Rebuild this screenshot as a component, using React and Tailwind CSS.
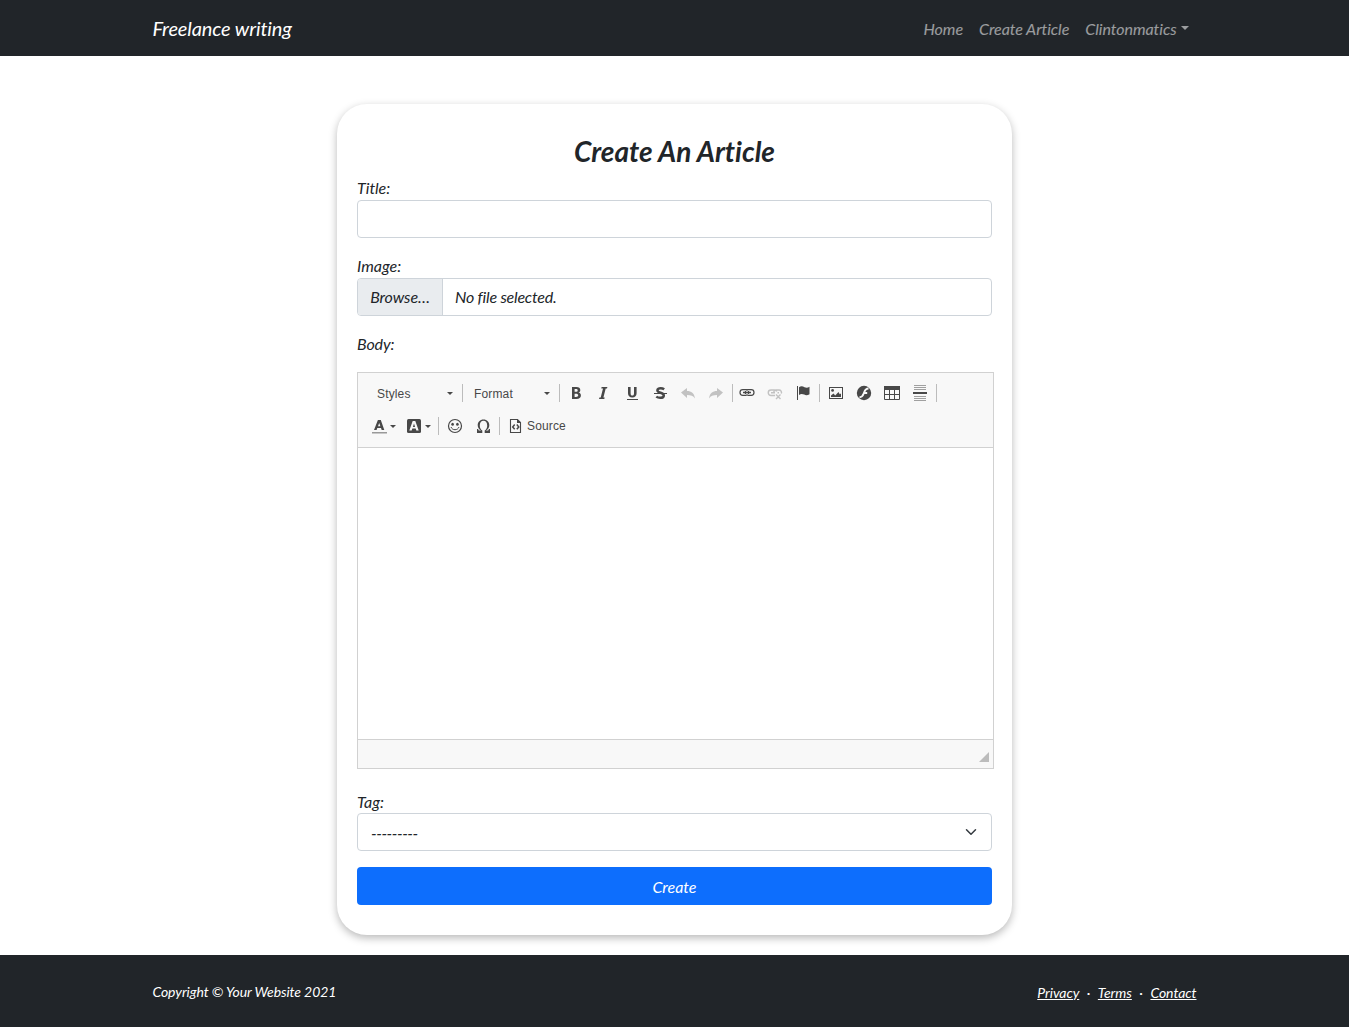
import React from "react";

const INK = "#484848";

function Icon({ children, className = "" }) {
  return (
    <svg width="16" height="16" viewBox="0 0 16 16" fill="none" className={`shrink-0 text-[#484848] ${className}`}>
      {children}
    </svg>
  );
}

function Tool({ children, label, className = "" }) {
  return (
    <button type="button" aria-label={label} className={`flex h-7 w-7 shrink-0 items-center justify-center ${className}`}>
      {children}
    </button>
  );
}

function Sep({ className = "" }) {
  return <span className={`h-[18px] w-px shrink-0 bg-[#bcbcbc] ${className}`} />;
}

function Arrow({ className = "" }) {
  return (
    <svg width="6" height="3" viewBox="0 0 6 3" className={`shrink-0 ${className}`}>
      <path d="M0 0h6L3 3z" fill={INK} />
    </svg>
  );
}

const BoldIcon = () => (
  <Icon>
    <path fill="currentColor" fillRule="evenodd" d="M4 2h4.300c2.600 0 4 1 4 3 0 1.300-.7 2.200-1.900 2.600 1.600.3 2.500 1.300 2.500 2.900 0 2.300-1.600 3.500-4.500 3.500H4zm2.600 2v2.800h1.200c1.300 0 1.900-.4 1.900-1.400S9.100 4 7.800 4zm0 4.700V12h1.300c1.500 0 2.300-.5 2.300-1.700 0-1.100-.8-1.600-2.300-1.600z" />
  </Icon>
);
const ItalicIcon = () => (
  <Icon>
    <path fill="currentColor" d="M5.600 2h5.800l-.4 1.500H9.700L7.400 12.500h1.300L8.300 14H3l.4-1.500h1.300L7 3.500H5.300z" />
  </Icon>
);
const UnderlineIcon = () => (
  <Icon>
    <path fill="currentColor" d="M4 2h2.600v6.200c0 1.500.5 2.300 1.700 2.300s1.700-.8 1.700-2.300V2h2.600v6.200c0 2.700-1.500 4.200-4.300 4.200S4 10.900 4 8.200zM3 14h11v1H3z" />
  </Icon>
);
const StrikeIcon = () => (
  <Icon>
    <path stroke="currentColor" strokeWidth="2.500" d="M12.200 4.200C11.200 3.500 10 3.200 8.600 3.200 6.700 3.200 5.400 3.900 5.400 5.200c0 3.100 6.400 2 6.400 5.200 0 1.600-1.400 2.400-3.500 2.400-1.500 0-2.900-.3-4-1.200" />
    <path fill="currentColor" d="M2 8h13v1H2z" />
  </Icon>
);
const UndoIcon = () => (
  <Icon className="opacity-30">
    <path fill="currentColor" d="M1 7.500 7 3v3c4.300 0 7.300 2.200 8 7.500-1.700-2.600-4-3.500-8-3.500v3z" />
  </Icon>
);
const RedoIcon = () => (
  <Icon className="opacity-30">
    <path fill="currentColor" d="M15 7.500 9 3v3c-4.300 0-7.300 2.200-8 7.500C2.700 10.900 5 10 9 10v3z" />
  </Icon>
);
const LinkIcon = () => (
  <Icon>
    <path stroke="currentColor" strokeWidth="1.200" d="M8.300 5.300A2 2 0 0 0 7 4.700H3.800a2.800 2.800 0 0 0 0 5.600H7a2 2 0 0 0 1.300-.6M7.700 5.300A2 2 0 0 1 9 4.700h3.200a2.800 2.800 0 0 1 0 5.600H9a2 2 0 0 1-1.300-.6" />
    <path stroke="currentColor" strokeWidth="1.300" d="M4 7.500h8M6.500 6v3M9.500 6v3" />
  </Icon>
);
const UnlinkIcon = () => (
  <Icon className="opacity-30">
    <path stroke="currentColor" strokeWidth="1.400" d="M8 10.500H4A2.500 2.500 0 0 1 4 5h3.500c1 0 1.800.5 2.200 1.500M7 8.300C6.500 6.500 7.500 5 9 5h3a2.500 2.500 0 0 1 2.300 3.500M4 7.700h4M10.500 7.700h1.500M9 9.500l4.500 4.500M13.500 9.500 9 14" />
  </Icon>
);
const FlagIcon = () => (
  <Icon>
    <path fill="currentColor" d="M2 1h1v14H2zM4 2.300c2-1.600 3.800-1 5.500-.1 1.800.8 3.300.6 5-.4v7.400c-1.700 1-3.500 1.300-5.300.4C7.500 8.700 5.800 8.500 4 10z" />
  </Icon>
);
const ImageIcon = () => (
  <Icon>
    <path fill="currentColor" fillRule="evenodd" d="M1 2h14v12H1zm1 1v10h12V3z" />
    <path fill="currentColor" d="M3 12V10.500L5.500 8.500l1.700 2L10.500 7l1.200 2.300L13 8.400V12z" />
    <circle cx="4.600" cy="5.400" r="1.400" fill="currentColor" />
  </Icon>
);
const FlashIcon = () => (
  <Icon>
    <circle cx="8" cy="8" r="7.200" fill="currentColor" />
    <path stroke="#f8f8f8" strokeWidth="1.900" d="M12.500 3.500C9 3.600 8.700 6 7.700 8.500 6.900 10.800 6 12.200 3.500 12.300M7.500 8h3.700" />
  </Icon>
);
const TableIcon = () => (
  <Icon>
    <path fill="currentColor" d="M0 1h16v4H0z" />
    <path stroke="currentColor" d="M.5 4v10.500h15V4M5.500 4v10.500M10.500 4v10.500M0 9.500h16" />
  </Icon>
);
const RuleIcon = () => (
  <Icon>
    <path fill="#a0a0a0" d="M2 0h12v1H2zM2 2h12v1H2zM2 4h12v1H2zM2 11h12v1H2zM2 13h12v1H2zM2 15h12v1H2z" />
    <path fill="currentColor" d="M1 7h14v2H1z" />
  </Icon>
);
const TextColorIcon = () => (
  <Icon>
    <path fill="currentColor" fillRule="evenodd" d="M6.900 2h2.900L13.300 12h-2.600l-.7-2.100H6.300L5.600 12H3zm1.300 2.900L7 8.200h2.400z" />
    <path fill="#999" d="M1 14h15v1.500H1z" />
  </Icon>
);
const BgColorIcon = () => (
  <Icon>
    <rect x="1" y="1" width="14" height="14" rx="1.500" fill="currentColor" />
    <path fill="#f8f8f8" fillRule="evenodd" d="M6.700 3h2.600l3.400 9.500h-2.400l-.6-1.900H6.300l-.6 1.900H3.300zM8 5.500 6.900 8.900h2.200z" />
  </Icon>
);
const SmileyIcon = () => (
  <Icon>
    <circle cx="8" cy="8" r="6.500" stroke="currentColor" strokeWidth="1.200" />
    <ellipse cx="5.600" cy="6.200" rx="1.300" ry="1.500" fill="currentColor" />
    <ellipse cx="10.400" cy="6.200" rx="1.300" ry="1.500" fill="currentColor" />
    <path stroke="currentColor" d="M4 9c.8 1.900 2.200 2.700 4 2.700s3.200-.8 4-2.700" />
  </Icon>
);
const OmegaIcon = () => (
  <Icon>
    <path fill="currentColor" fillRule="evenodd" d="M2 11h1.200c.1 1 .5 1.500 1.500 1.500h1.500C4.200 11.500 2.700 9.700 2.700 7.200 2.700 4 5 1.500 8.500 1.500s5.800 2.500 5.800 5.700c0 2.500-1.500 4.300-3.500 5.300h1.500c1 0 1.400-.5 1.500-1.500H15v4H9.700v-2.600c1.600-.9 2.500-2.700 2.500-5 0-2.800-1.400-4.700-3.700-4.700S4.800 4.600 4.800 7.400c0 2.300.9 4.100 2.500 5V15H2z" />
  </Icon>
);
const SourceIcon = () => (
  <Icon>
    <path stroke="currentColor" strokeWidth="1.100" d="M2.500 1.500h7l3 3v10h-10z" />
    <path fill="currentColor" d="M9 1v4h4z" />
    <path stroke="currentColor" strokeWidth="1.500" d="M6.700 6.500 4.700 8.900l2 2.400M8.800 6.500l2 2.400-2 2.400" />
  </Icon>
);

function Toolbar() {
  return (
    <div className="h-[75px] border-b border-[#d1d1d1] bg-[#f8f8f8] pt-[6px] font-['Liberation_Sans',Arial,sans-serif] text-[12px] tracking-[0.15px] not-italic text-[#484848]">
      <div className="flex h-7 items-center">
        <button type="button" className="flex w-[104px] items-center justify-between pr-[9px] pl-[19px]">
          <span className="pt-0.5">Styles</span>
          <Arrow />
        </button>
        <Sep />
        <button type="button" className="flex w-24 items-center justify-between pr-[9px] pl-[11px]">
          <span className="pt-0.5">Format</span>
          <Arrow />
        </button>
        <Sep className="mr-0.5" />
        <Tool label="Bold"><BoldIcon /></Tool>
        <Tool label="Italic"><ItalicIcon /></Tool>
        <Tool label="Underline"><UnderlineIcon /></Tool>
        <Tool label="Strikethrough"><StrikeIcon /></Tool>
        <Tool label="Undo"><UndoIcon /></Tool>
        <Tool label="Redo"><RedoIcon /></Tool>
        <Sep className="ml-0.5" />
        <Tool label="Link"><LinkIcon /></Tool>
        <Tool label="Unlink"><UnlinkIcon /></Tool>
        <Tool label="Anchor"><FlagIcon /></Tool>
        <Sep className="mx-0.5" />
        <Tool label="Image"><ImageIcon /></Tool>
        <Tool label="Flash"><FlashIcon /></Tool>
        <Tool label="Table"><TableIcon /></Tool>
        <Tool label="Horizontal line"><RuleIcon /></Tool>
        <Sep className="ml-0.5" />
      </div>
      <div className="mt-[5px] flex h-7 items-center pl-[13px]">
        <button type="button" aria-label="Text color" className="flex w-[35px] items-center gap-[3px]">
          <TextColorIcon />
          <Arrow />
        </button>
        <button type="button" aria-label="Background color" className="flex w-8 items-center gap-[3px]">
          <BgColorIcon />
          <Arrow />
        </button>
        <Sep className="mr-0.5" />
        <Tool label="Smiley"><SmileyIcon /></Tool>
        <Tool label="Special character"><OmegaIcon /></Tool>
        <Sep className="ml-0.5" />
        <button type="button" className="ml-2 flex items-center gap-[3px]">
          <SourceIcon />
          <span>Source</span>
        </button>
      </div>
    </div>
  );
}

export default function App() {
  return (
    <div className="flex h-[1027px] w-full flex-col overflow-hidden bg-white font-[Lato,sans-serif] text-base leading-6 text-[#212529] italic">
      <header className="h-14 shrink-0 bg-[#212529]">
        <nav className="mx-auto flex h-full w-[1044px] items-center justify-between">
          <a href="#" className="text-xl leading-[30px] tracking-[-0.12px] text-white">Freelance writing</a>
          <div className="flex gap-4 pt-px pr-2 tracking-[-0.04px] text-white/55">
            <a href="#">Home</a>
            <a href="#">Create Article</a>
            <a href="#" className="flex items-center">
              Clintonmatics
              <span className="mb-0.5 ml-1 border-x-[4.8px] border-t-[4.8px] border-x-transparent border-t-current" />
            </a>
          </div>
        </nav>
      </header>

      <main className="flex-1">
        <form className="mx-auto mt-12 h-[831px] w-[675px] rounded-[30px] px-5 pt-[30px] shadow-[0_3px_8px_rgba(0,0,0,0.28)]">
          <h1 className="text-center text-[28px] leading-[34px] font-bold tracking-[0.01px]">Create An Article</h1>
          <label htmlFor="title" className="mt-2 block tracking-[-0.02px]">Title:</label>
          <input id="title" className="block h-[38px] w-full rounded border border-[#ced4da]" />
          <div className="mt-4">Image:</div>
          <div className="flex h-[38px] items-stretch overflow-hidden rounded border border-[#ced4da]">
            <button type="button" className="w-[85px] border-r border-[#ced4da] bg-[#e9ecef] tracking-[-0.1px]">Browse…</button>
            <span className="pt-1.5 pl-3 tracking-[-0.2px]">No file selected.</span>
          </div>
          <div className="mt-4 tracking-[-0.1px]">Body:</div>
          <div className="mt-4 w-[637px] border border-[#d1d1d1]">
            <Toolbar />
            <div className="h-[291px] bg-white" />
            <div className="flex h-[29px] items-end justify-end border-t border-[#d1d1d1] bg-[#f8f8f8] pr-1 pb-1.5">
              <svg width="10" height="10" viewBox="0 0 10 10"><path d="M10 0v10H0z" fill="#bcbcbc" /></svg>
            </div>
          </div>
          <div className="mt-[21px] h-[23px]">Tag:</div>
          <div className="flex h-[38px] items-center justify-between rounded border border-[#ced4da] pr-3 pl-[13px]">
            <span className="pt-0.5 tracking-[-0.42px]">---------</span>
            <svg width="16" height="12" viewBox="0 0 16 16" fill="none" stroke="#343a40" strokeWidth="2" strokeLinecap="round" strokeLinejoin="round">
              <path d="m2 5 6 6 6-6" />
            </svg>
          </div>
          <button type="button" className="mt-4 block h-[38px] w-full rounded bg-[#0d6efd] pt-0.5 text-white">Create</button>
        </form>
      </main>

      <footer className="h-[72px] shrink-0 bg-[#212529] text-sm leading-[21px] text-white">
        <div className="mx-auto flex h-full w-[1044px] items-center justify-between">
          <span className="tracking-[-0.09px]">Copyright © Your Website 2021</span>
          <div className="flex pt-0.5 tracking-[-0.05px]">
            <a href="#" className="underline">Privacy</a>
            <span className="mx-[7.5px]">·</span>
            <a href="#" className="underline">Terms</a>
            <span className="mx-[7.5px]">·</span>
            <a href="#" className="underline">Contact</a>
          </div>
        </div>
      </footer>
    </div>
  );
}
